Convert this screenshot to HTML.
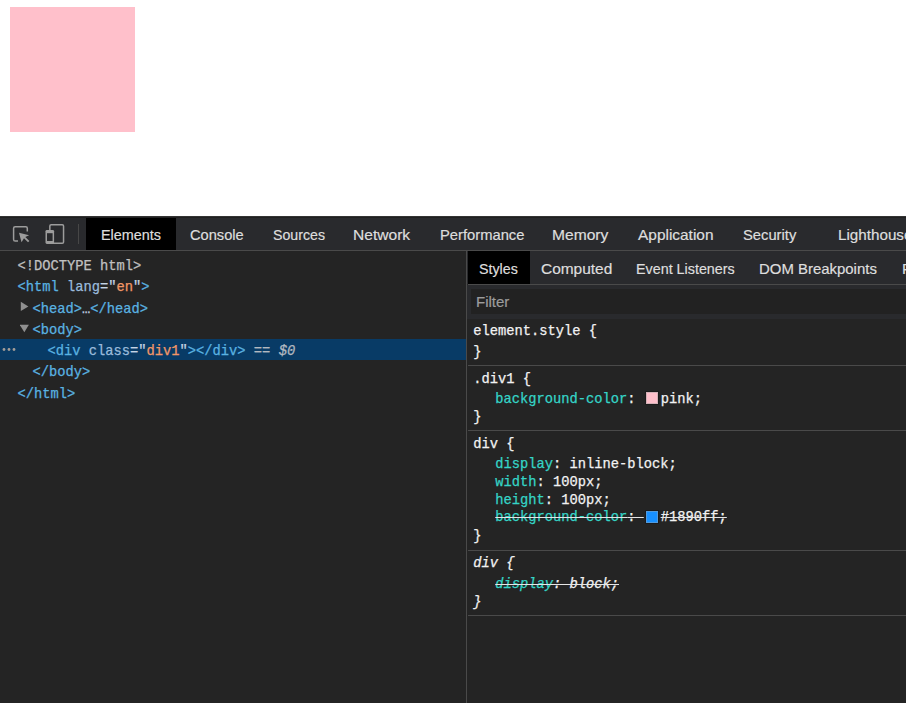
<!DOCTYPE html>
<html><head><meta charset="utf-8"><style>
html,body{margin:0;padding:0;width:906px;height:703px;overflow:hidden;background:#fff;}
.a{position:absolute;}
.m{position:absolute;font-family:"Liberation Mono",monospace;font-size:13.75px;line-height:16px;white-space:pre;-webkit-text-stroke:0.25px currentColor;}
.s{position:absolute;font-family:"Liberation Sans",sans-serif;font-size:15px;line-height:16px;white-space:pre;color:#dedede;transform-origin:0 0;-webkit-text-stroke:0.2px currentColor;}
.tag{color:#5ab3e2} .q{color:#c4d4e4} .an{color:#9bbbdc} .av{color:#f29766}
.p{color:#35d4c7} .t{color:#f2f2f2}
.str{text-decoration:line-through;text-decoration-color:#e6e6e6;}
</style></head><body>
<div class="a" style="left:10px;top:7px;width:125px;height:125px;background:#ffc0cb"></div>
<div class="a" style="left:0;top:216px;width:906px;height:487px;background:#242424"></div>
<div class="a" style="left:0;top:216px;width:906px;height:1px;background:#333"></div>
<div class="a" style="left:0;top:217px;width:906px;height:1px;background:#202020"></div>
<div class="a" style="left:0;top:218px;width:906px;height:32px;background:#292a2d"></div>
<div class="a" style="left:0;top:250px;width:906px;height:1px;background:#4a4a4a"></div>
<div class="a" style="left:86px;top:218px;width:90px;height:32px;background:#000"></div>

<svg class="a" style="left:0;top:216px" width="90" height="34" viewBox="0 0 90 34">
<path d="M18 25.1 H15.2 Q13.6 25.1 13.6 23.5 V12.3 Q13.6 10.7 15.2 10.7 H25.8 Q27.3 10.7 27.3 12.3 V15.6" fill="none" stroke="#9c9c9c" stroke-width="1.5"/>
<path d="M19 16.8 L29.1 19.3 L25.3 20.9 L29.4 25 L28 26.3 L24 22.3 L21.5 26.2 Z" fill="#9c9c9c"/>
<rect x="49.85" y="8.65" width="13.7" height="18.6" rx="1.3" fill="none" stroke="#9c9c9c" stroke-width="1.5"/>
<rect x="45.5" y="13.9" width="8.6" height="14.1" rx="1.4" fill="#9c9c9c"/>
<rect x="47" y="17.2" width="5.6" height="7.8" fill="#292a2d"/>
<rect x="78" y="8" width="1" height="20" fill="#474747"/>
</svg>

<div class="s" style="left:100.54px;top:227px;transform:scaleX(0.9607)">Elements</div>
<div class="s" style="left:190.42px;top:227px;transform:scaleX(0.9759)">Console</div>
<div class="s" style="left:273.36px;top:227px;transform:scaleX(0.9444)">Sources</div>
<div class="s" style="left:352.86px;top:227px;transform:scaleX(1.0389)">Network</div>
<div class="s" style="left:440.12px;top:227px;transform:scaleX(0.9833)">Performance</div>
<div class="s" style="left:551.86px;top:227px;transform:scaleX(1.0396)">Memory</div>
<div class="s" style="left:638.27px;top:227px;transform:scaleX(1.0288)">Application</div>
<div class="s" style="left:743.12px;top:227px;transform:scaleX(0.9830)">Security</div>
<div class="s" style="left:837.59px;top:227px;transform:scaleX(1.0139)">Lighthouse</div>
<div class="a" style="left:466px;top:251px;width:1px;height:452px;background:#4a4a4a"></div>
<div class="a" style="left:0;top:338.75px;width:466px;height:21.25px;background:#083b66"></div>
<div class="m" style="left:17.5px;top:259.10px"><span style="color:#c0c0c0">&lt;!DOCTYPE html&gt;</span></div>
<div class="m" style="left:17.5px;top:280.35px"><span class="tag">&lt;html</span> <span class="an">lang</span><span class="q">="</span><span class="av">en</span><span class="q">"</span><span class="tag">&gt;</span></div>
<div class="m" style="left:32.5px;top:301.60px"><span class="tag">&lt;head&gt;</span><span style="color:#c4d4e4">…</span><span class="tag">&lt;/head&gt;</span></div>
<div class="m" style="left:32.5px;top:322.85px"><span class="tag">&lt;body&gt;</span></div>
<div class="m" style="left:47.5px;top:344.10px"><span class="tag">&lt;div</span> <span class="an">class</span><span class="q">="</span><span class="av">div1</span><span class="q">"</span><span class="tag">&gt;&lt;/div&gt;</span><span style="color:#b2b8c0"> == <i>$0</i></span></div>
<div class="m" style="left:32.5px;top:365.35px"><span class="tag">&lt;/body&gt;</span></div>
<div class="m" style="left:17.5px;top:386.60px"><span class="tag">&lt;/html&gt;</span></div>
<svg class="a" style="left:20px;top:300px" width="12" height="36" viewBox="0 0 12 36"><path d="M0.8 1.8 L8.4 6.4 L0.8 11 Z" fill="#8f8f8f"/><path d="M-0.2 24.8 L8.9 24.8 L4.35 32.2 Z" fill="#8f8f8f"/></svg>
<svg class="a" style="left:0;top:345px" width="20" height="10"><circle cx="4" cy="4.5" r="1.4" fill="#a49e98"/><circle cx="9" cy="4.5" r="1.4" fill="#a49e98"/><circle cx="14" cy="4.5" r="1.4" fill="#a49e98"/></svg>
<div class="a" style="left:467px;top:251px;width:439px;height:33px;background:#292a2d"></div>
<div class="a" style="left:468px;top:251px;width:62px;height:33px;background:#000"></div>
<div class="a" style="left:468px;top:284px;width:438px;height:1px;background:#4a4a4a"></div>
<div class="a" style="left:467px;top:285px;width:439px;height:34px;background:#292a2d"></div>
<div class="a" style="left:471px;top:289px;width:435px;height:25px;background:#222"></div>
<div class="s" style="left:478.85px;top:261px;transform:scaleX(0.9487)">Styles</div>
<div class="s" style="left:540.97px;top:261px;transform:scaleX(1.0299)">Computed</div>
<div class="s" style="left:636.45px;top:261px;transform:scaleX(0.9549)">Event Listeners</div>
<div class="s" style="left:758.80px;top:261px;transform:scaleX(0.9957)">DOM Breakpoints</div>
<div class="s" style="left:901.99px;top:261px;transform:scaleX(1.0149)">Properties</div>
<div class="s" style="left:476px;top:293.5px;color:#9c9c9c">Filter</div>
<div class="a" style="left:468px;top:365px;width:438px;height:1px;background:#4a4a4a"></div>
<div class="a" style="left:468px;top:430px;width:438px;height:1px;background:#4a4a4a"></div>
<div class="a" style="left:468px;top:550px;width:438px;height:1px;background:#4a4a4a"></div>
<div class="a" style="left:468px;top:615px;width:438px;height:1px;background:#4a4a4a"></div>
<div class="m" style="left:473.25px;top:324.10px"><span class="t">element.style {</span></div>
<div class="m" style="left:473.25px;top:345.00px"><span class="t">}</span></div>
<div class="m" style="left:473.25px;top:372.30px"><span class="t">.div1 {</span></div>
<div class="m" style="left:495.25px;top:392.00px"><span class="p">background-color</span><span class="t">: </span><span style="display:inline-block;width:17px"></span><span class="t">pink;</span></div>
<div class="m" style="left:473.25px;top:410.00px"><span class="t">}</span></div>
<div class="m" style="left:473.25px;top:437.00px"><span class="t">div {</span></div>
<div class="m" style="left:495.25px;top:456.80px"><span class="p">display</span><span class="t">: inline-block;</span></div>
<div class="m" style="left:495.25px;top:474.80px"><span class="p">width</span><span class="t">: 100px;</span></div>
<div class="m" style="left:495.25px;top:492.80px"><span class="p">height</span><span class="t">: 100px;</span></div>
<div class="m" style="left:495.25px;top:510.40px"><span class="str t"><span class="p">background-color</span>: <span style="display:inline-block;width:17px"></span>#1890ff;</span></div>
<div class="m" style="left:473.25px;top:528.50px"><span class="t">}</span></div>
<div class="m" style="left:473.25px;top:555.60px"><span class="t"><i>div {</i></span></div>
<div class="m" style="left:495.25px;top:576.60px"><span class="str t"><i><span class="p">display</span>: block;</i></span></div>
<div class="m" style="left:473.25px;top:594.60px"><span class="t"><i>}</i></span></div>
<div class="a" style="left:645px;top:391px;width:14px;height:14px;background:#1b1b1b"></div>
<div class="a" style="left:646px;top:392px;width:10px;height:10px;background:#ffc0cb;border:1px solid rgba(160,160,160,0.45)"></div>
<div class="a" style="left:645px;top:510px;width:14px;height:14px;background:#1b1b1b"></div>
<div class="a" style="left:646px;top:511px;width:10px;height:10px;background:#1890ff;border:1px solid rgba(170,170,170,0.4)"></div>
</body></html>
